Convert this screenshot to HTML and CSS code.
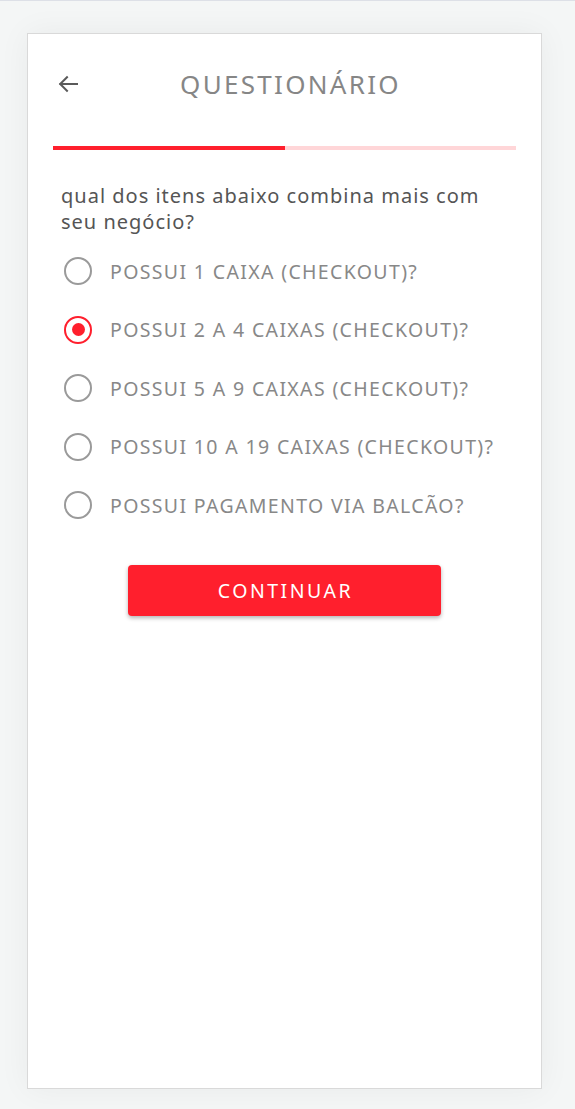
FILE: index.html
```html
<!DOCTYPE html>
<html lang="pt-BR">
<head>
<meta charset="utf-8">
<title>Questionário</title>
<link rel="stylesheet" href="styles.css">
</head>
<body>
<div class="page">
  <main class="card">
    <header class="header">
      <button class="back" aria-label="Voltar">
        <svg width="20" height="18" viewBox="0 0 20 18" fill="none" stroke="#5a5a5a" stroke-width="2" stroke-linecap="square">
          <path d="M19 9H2.5"/>
          <path d="M9 2.2L2.2 9L9 15.8"/>
        </svg>
      </button>
      <h1 class="title">QUESTIONÁRIO</h1>
      <span class="spacer"></span>
    </header>
    <div class="progress"><div class="progress-fill" style="width:50%"></div></div>
    <p class="question">qual dos itens abaixo combina mais com seu negócio?</p>
    <ul class="options">
      <li class="option"><span class="radio"></span><span class="label">POSSUI 1 CAIXA (CHECKOUT)?</span></li>
      <li class="option selected"><span class="radio"></span><span class="label">POSSUI 2 A 4 CAIXAS (CHECKOUT)?</span></li>
      <li class="option"><span class="radio"></span><span class="label">POSSUI 5 A 9 CAIXAS (CHECKOUT)?</span></li>
      <li class="option"><span class="radio"></span><span class="label">POSSUI 10 A 19 CAIXAS (CHECKOUT)?</span></li>
      <li class="option"><span class="radio"></span><span class="label">POSSUI PAGAMENTO VIA BALCÃO?</span></li>
    </ul>
    <div class="actions">
      <button class="continue">CONTINUAR</button>
    </div>
  </main>
</div>
</body>
</html>
```

FILE: styles.css
```css
* { box-sizing: border-box; }
html, body { margin: 0; padding: 0; }
body {
  background: #f4f6f6;
  border-top: 1px solid #dde0e7;
  font-family: "Noto Sans", "Open Sans", sans-serif;
  height: 1109px;
  overflow: hidden;
}
.page {
  padding: 32px 0 0 27px;
}
.card {
  width: 515px;
  height: 1056px;
  background: #fff;
  border: 1px solid #d9d9d9;
  box-shadow: 0 0 30px rgba(0, 0, 0, 0.05);
  padding: 30px 25px;
}
.header {
  display: flex;
  align-items: center;
  height: 40px;
}
.back {
  width: 40px;
  height: 40px;
  border: 0;
  background: none;
  padding: 0 0 0 5px;
  display: flex;
  align-items: center;
  cursor: pointer;
}
.title {
  flex: 1;
  margin: 0;
  text-align: center;
  font-size: 26px;
  font-weight: 400;
  color: #868686;
  letter-spacing: 2.3px;
  padding-left: 12px;
}
.spacer { width: 40px; }
.progress {
  margin-top: 42px;
  height: 4px;
  background: #ffd6d8;
  display: flex;
}
.progress-fill {
  background: #ff1f2d;
  height: 100%;
}
.question {
  margin: 33px 0 0;
  padding: 0 20px 0 8px;
  font-size: 20px;
  line-height: 26px;
  color: #555;
  letter-spacing: 1px;
}
.options {
  list-style: none;
  margin: 7px 0 0;
  padding: 0;
}
.option {
  height: 58.5px;
  display: flex;
  align-items: center;
  padding-left: 11px;
  gap: 18px;
}
.radio {
  width: 28px;
  height: 28px;
  border-radius: 50%;
  border: 2.5px solid #9a9a9a;
  display: flex;
  align-items: center;
  justify-content: center;
  flex: none;
}
.option.selected .radio {
  border-color: #ff1f2d;
}
.option.selected .radio::after {
  content: "";
  width: 13px;
  height: 13px;
  border-radius: 50%;
  background: #ff1f2d;
}
.label {
  font-size: 19.5px;
  color: #888;
  letter-spacing: 1.35px;
  white-space: nowrap;
}
.actions {
  display: flex;
  justify-content: center;
  margin-top: 30px;
}
.continue {
  width: 313px;
  height: 51px;
  border: 0;
  border-radius: 4px;
  background: #ff1f2d;
  color: #fff;
  font-family: inherit;
  font-size: 19.5px;
  letter-spacing: 2.5px;
  padding: 0 0 0 2px;
  box-shadow: 0 2px 4px rgba(0, 0, 0, 0.3);
  cursor: pointer;
}
```
